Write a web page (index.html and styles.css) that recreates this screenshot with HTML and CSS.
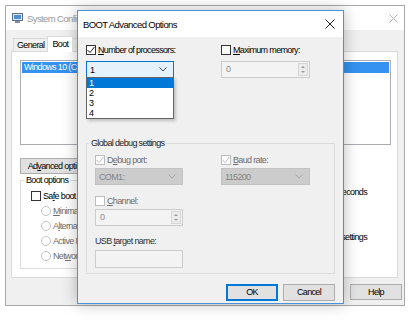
FILE: index.html
```html
<!DOCTYPE html>
<html lang="en">
<head>
    <meta charset="UTF-8">
    <meta name="viewport" content="width=device-width, initial-scale=1.0">
    <title>BOOT Advanced Options</title>
    <link rel="stylesheet" href="styles.css">
</head>
<body>
    <div class="desktop">

        <!-- System Configuration window (behind) -->
        <div class="window main-window">
            <div class="titlebar">
                <svg class="app-icon" width="11" height="11" viewBox="0 0 11 11">
                    <rect x="0.5" y="0.5" width="10" height="7" fill="#dfe8f2" stroke="#5a6f8c"/>
                    <rect x="2" y="2" width="7" height="4" fill="#4f8fd6"/>
                    <rect x="3" y="8" width="5" height="2" fill="#7d8ea6"/>
                </svg>
                <span class="title">System Configuration</span>
                <svg class="close-icon" width="9" height="9" viewBox="0 0 9 9">
                    <path d="M0.5 0.5 L8.5 8.5 M8.5 0.5 L0.5 8.5" stroke="#b3b3b3" stroke-width="1"/>
                </svg>
            </div>

            <div class="tabs">
                <span class="tab">General</span>
                <span class="tab active">Boot</span>
                <span class="tab">Services</span>
                <span class="tab">Startup</span>
                <span class="tab">Tools</span>
            </div>

            <div class="tab-panel">
                <div class="os-list">
                    <div class="os-item selected">Windows 10 (C:\WINDOWS) : Current OS; Default OS</div>
                </div>

                <div class="list-buttons">
                    <button class="btn wide">Ad<u>v</u>anced options...</button>
                    <button class="btn wide">Set as default</button>
                    <button class="btn">Delete</button>
                </div>

                <div class="boot-row">
                    <fieldset class="group boot-options">
                        <legend>Boot options</legend>
                        <div class="check-row">
                            <span class="checkbox"></span>
                            <span>Sa<u>f</u>e boot</span>
                        </div>
                        <div class="radio-list">
                            <div class="check-row disabled"><span class="radio"></span><span><u>M</u>inimal</span></div>
                            <div class="check-row disabled"><span class="radio"></span><span>A<u>l</u>ternate shell</span></div>
                            <div class="check-row disabled"><span class="radio"></span><span>Active Directory repair</span></div>
                            <div class="check-row disabled"><span class="radio"></span><span>Net<u>w</u>ork</span></div>
                        </div>
                    </fieldset>

                    <div class="timeout-col">
                        <div class="timeout-row">
                            <span>Timeout:</span>
                            <span class="textbox small">30</span>
                            <span>seconds</span>
                        </div>
                        <div class="check-row permanent">
                            <span class="checkbox"></span>
                            <span>Make all boot settings<br>permanent</span>
                        </div>
                    </div>
                </div>
            </div>

            <div class="window-buttons">
                <button class="btn">OK</button>
                <button class="btn">Cancel</button>
                <button class="btn">Apply</button>
                <button class="btn">Help</button>
            </div>
        </div>

        <!-- BOOT Advanced Options dialog (front) -->
        <div class="window dialog">
            <div class="titlebar">
                <span class="title">BOOT Advanced Options</span>
                <svg class="close-icon" width="10" height="10" viewBox="0 0 10 10">
                    <path d="M0.5 0.5 L9.5 9.5 M9.5 0.5 L0.5 9.5" stroke="#222" stroke-width="1"/>
                </svg>
            </div>

            <div class="dialog-body">
                <div class="field-grid top-grid">
                    <div class="field">
                        <div class="check-row">
                            <span class="checkbox checked">
                                <svg width="10" height="10" viewBox="0 0 10 10"><path d="M1.5 5 L4 7.5 L8.5 2" fill="none" stroke="#222" stroke-width="1"/></svg>
                            </span>
                            <span><u>N</u>umber of processors:</span>
                        </div>
                        <div class="combo open">
                            <span>1</span>
                            <svg class="chevron" width="8" height="5" viewBox="0 0 8 5"><path d="M0.5 0.5 L4 4 L7.5 0.5" fill="none" stroke="#444"/></svg>
                        </div>
                        <ul class="dropdown">
                            <li class="selected">1</li>
                            <li>2</li>
                            <li>3</li>
                            <li>4</li>
                        </ul>
                    </div>

                    <div class="field">
                        <div class="check-row">
                            <span class="checkbox"></span>
                            <span><u>M</u>aximum memory:</span>
                        </div>
                        <div class="spinbox disabled">
                            <span class="value">0</span>
                            <span class="spin">
                                <span class="up"></span>
                                <span class="down"></span>
                            </span>
                        </div>
                    </div>
                </div>

                <fieldset class="group debug-group">
                    <legend>Global debug settings</legend>
                    <div class="field-grid debug-grid">
                        <div class="field">
                            <div class="check-row disabled">
                                <span class="checkbox checked">
                                    <svg width="10" height="10" viewBox="0 0 10 10"><path d="M1.5 5 L4 7.5 L8.5 2" fill="none" stroke="#bcbcbc" stroke-width="1"/></svg>
                                </span>
                                <span>D<u>e</u>bug port:</span>
                            </div>
                            <div class="combo disabled">
                                <span>COM1:</span>
                                <svg class="chevron" width="8" height="5" viewBox="0 0 8 5"><path d="M0.5 0.5 L4 4 L7.5 0.5" fill="none" stroke="#a8a8a8"/></svg>
                            </div>
                        </div>
                        <div class="field">
                            <div class="check-row disabled">
                                <span class="checkbox checked">
                                    <svg width="10" height="10" viewBox="0 0 10 10"><path d="M1.5 5 L4 7.5 L8.5 2" fill="none" stroke="#bcbcbc" stroke-width="1"/></svg>
                                </span>
                                <span><u>B</u>aud rate:</span>
                            </div>
                            <div class="combo disabled">
                                <span>115200</span>
                                <svg class="chevron" width="8" height="5" viewBox="0 0 8 5"><path d="M0.5 0.5 L4 4 L7.5 0.5" fill="none" stroke="#a8a8a8"/></svg>
                            </div>
                        </div>

                        <div class="field second-row">
                            <div class="check-row disabled">
                                <span class="checkbox"></span>
                                <span><u>C</u>hannel:</span>
                            </div>
                            <div class="spinbox disabled">
                                <span class="value">0</span>
                                <span class="spin">
                                    <span class="up"></span>
                                    <span class="down"></span>
                                </span>
                            </div>
                        </div>
                    </div>

                    <div class="usb-label">USB <u>t</u>arget name:</div>
                    <div class="textbox disabled"></div>
                </fieldset>

                <div class="dialog-buttons">
                    <button class="btn default">OK</button>
                    <button class="btn">Cancel</button>
                </div>
            </div>
        </div>

    </div>
</body>
</html>
```

FILE: styles.css
```css
* {
    margin: 0;
    padding: 0;
    box-sizing: border-box;
}

body {
    background: #ffffff;
    font-family: "Liberation Sans", Arial, sans-serif;
    font-size: 9px;
    letter-spacing: -0.65px;
    color: #000;
}

.desktop {
    position: relative;
    width: 412px;
    height: 324px;
    overflow: hidden;
}

u {
    text-decoration: underline;
    text-underline-offset: 1px;
}

button {
    font: inherit;
    letter-spacing: inherit;
    color: inherit;
}

/* ---------- windows ---------- */

.window {
    position: absolute;
    display: flex;
    flex-direction: column;
    background: #f0f0f0;
}

.main-window {
    left: 5px;
    top: 5px;
    width: 400px;
    height: 301px;
    border: 1px solid #a8a8a8;
}

.dialog {
    left: 77px;
    top: 10px;
    width: 267px;
    height: 294px;
    border: 1px solid #4a92d9;
    box-shadow: 0 0 14px rgba(0, 0, 0, 0.28);
}

.titlebar {
    display: flex;
    align-items: center;
    background: #fff;
    flex-shrink: 0;
}

.title {
    flex: 1;
    font-size: 9.5px;
    letter-spacing: -0.6px;
    white-space: nowrap;
}

.main-window .titlebar {
    height: 24px;
    padding: 0 6px 0 6px;
}

.main-window .title {
    color: #9a9a9a;
    margin-left: 4px;
}

.dialog .titlebar {
    height: 26px;
    padding: 0 8px 0 5px;
}

/* ---------- tabs ---------- */

.tabs {
    display: flex;
    align-items: flex-end;
    height: 21px;
    padding-left: 7px;
}

.tab {
    height: 13px;
    line-height: 12px;
    padding: 0 3px;
    border: 1px solid #d9d9d9;
    border-bottom: none;
    margin-right: -1px;
    background: #f0f0f0;
    white-space: nowrap;
}

.tab.active {
    height: 16px;
    line-height: 14px;
    padding: 0 4px;
    background: #fff;
    position: relative;
    z-index: 1;
    margin-bottom: -1px;
}

.tab-panel {
    margin: 0 6px 0 5px;
    height: 227px;
    background: #fff;
    border: 1px solid #d9d9d9;
    padding: 8px 6px 8px 8px;
}

.os-list {
    height: 85px;
    border: 1px solid #aaadb3;
    padding: 1px;
}

.os-item {
    height: 11px;
    line-height: 11px;
    padding-left: 2px;
    white-space: nowrap;
}

.os-item.selected {
    background: #3592f0;
    color: #fff;
}

.list-buttons {
    display: flex;
    gap: 8px;
    margin-top: 13px;
}

.btn {
    height: 16px;
    width: 52px;
    border: 1px solid #adadad;
    background: #e1e1e1;
    text-align: center;
    line-height: 14px;
    white-space: nowrap;
}

.btn.wide {
    width: 82px;
}

.boot-row {
    display: flex;
    justify-content: space-between;
}

/* ---------- group boxes ---------- */

.group {
    border: 1px solid #dcdcdc;
}

.group legend {
    padding: 0 2px;
    line-height: 12px;
}

.boot-options {
    width: 180px;
    padding: 4px 0 6px 10px;
}

.boot-options legend {
    margin-left: -7px;
}

.radio-list {
    padding-left: 10px;
}

.timeout-col {
    display: flex;
    flex-direction: column;
    align-items: flex-end;
    padding: 10px 24px 0 0;
}

.timeout-row {
    display: flex;
    align-items: center;
    gap: 4px;
    height: 16px;
    white-space: nowrap;
}

.permanent {
    margin-top: 37px;
    align-items: flex-start;
}

.permanent span:last-child {
    line-height: 11px;
}

/* ---------- check boxes ---------- */

.check-row {
    display: flex;
    align-items: center;
    height: 12px;
    gap: 2px;
    white-space: nowrap;
}

.radio-list .check-row {
    margin-top: 3px;
}

.check-row.disabled {
    color: #6d6d6d;
}

.checkbox {
    width: 10px;
    height: 10px;
    flex-shrink: 0;
    border: 1px solid #333;
    background: #fff;
    display: flex;
    align-items: center;
    justify-content: center;
}

.checkbox svg {
    margin: -1px;
}

.disabled .checkbox {
    border-color: #bcbcbc;
}

.radio {
    width: 10px;
    height: 10px;
    border-radius: 50%;
    border: 1px solid #c4c4c4;
    background: #fff;
    flex-shrink: 0;
}

/* ---------- dialog ---------- */

.dialog-body {
    position: relative;
    flex: 1;
    padding: 7px 8px 0 8px;
}

.field-grid {
    display: grid;
}

.top-grid {
    grid-template-columns: 88px 89px;
    column-gap: 47px;
}

.field {
    position: relative;
}

.combo {
    display: flex;
    align-items: center;
    justify-content: space-between;
    height: 17px;
    margin-top: 5px;
    padding: 0 6px 0 3px;
    border: 1px solid #7a7a7a;
    background: #fff;
}

.combo.open {
    background: #e5f1fb;
    border-color: #0078d7;
}

.combo.disabled {
    background: #cccccc;
    border-color: #c3c3c3;
    color: #838383;
}

.dropdown {
    position: absolute;
    left: 0;
    top: 33px;
    width: 88px;
    list-style: none;
    background: #fff;
    border: 1px solid #646464;
    box-shadow: 2px 2px 3px rgba(0, 0, 0, 0.2);
    z-index: 5;
}

.dropdown li {
    height: 10px;
    line-height: 10px;
    padding-left: 2px;
}

.dropdown li.selected {
    background: #0078d7;
    color: #fff;
}

.spinbox {
    display: flex;
    height: 17px;
    margin-top: 5px;
    border: 1px solid #cccccc;
    background: #f3f3f3;
    color: #8a8a8a;
}

.spinbox .value {
    flex: 1;
    line-height: 15px;
    padding-left: 4px;
}

.spin {
    display: flex;
    flex-direction: column;
    width: 10px;
    margin: 1px 1px 1px 0;
    border: 1px solid #d6d6d6;
    background: #ececec;
}

.spin span {
    flex: 1;
    display: flex;
    align-items: center;
    justify-content: center;
}

.spin .up::before {
    content: "";
    border-left: 2px solid transparent;
    border-right: 2px solid transparent;
    border-bottom: 2px solid #9a9a9a;
}

.spin .down::before {
    content: "";
    border-left: 2px solid transparent;
    border-right: 2px solid transparent;
    border-top: 2px solid #9a9a9a;
}

.debug-group {
    margin-top: 59px;
    padding: 5px 0 5px 8px;
}

.debug-group legend {
    margin-left: -6px;
    color: #222;
}

.debug-grid {
    grid-template-columns: 88px 89px;
    column-gap: 38px;
}

.debug-grid .combo {
    margin-top: 2px;
}

.debug-grid .spinbox {
    margin-top: 2px;
}

.second-row {
    margin-top: 10px;
}

.usb-label {
    margin-top: 9px;
    line-height: 12px;
    color: #333;
}

.textbox {
    height: 18px;
    border: 1px solid #cccccc;
    background: #f3f3f3;
}

.debug-group .textbox {
    width: 88px;
    margin-top: 3px;
}

.textbox.small {
    width: 26px;
    height: 16px;
    background: #fff;
    border-color: #7a7a7a;
    line-height: 14px;
    padding-left: 3px;
}

.dialog-buttons {
    display: flex;
    justify-content: flex-end;
    gap: 5px;
    margin-top: 10px;
}

.dialog-buttons .btn {
    width: 52px;
    height: 17px;
    line-height: 15px;
}

.btn.default {
    border-color: #0078d7;
    box-shadow: inset 0 0 0 1px #0078d7;
}

.window-buttons {
    display: flex;
    justify-content: flex-end;
    gap: 6px;
    margin-top: 6px;
    padding-right: 2px;
}
```
